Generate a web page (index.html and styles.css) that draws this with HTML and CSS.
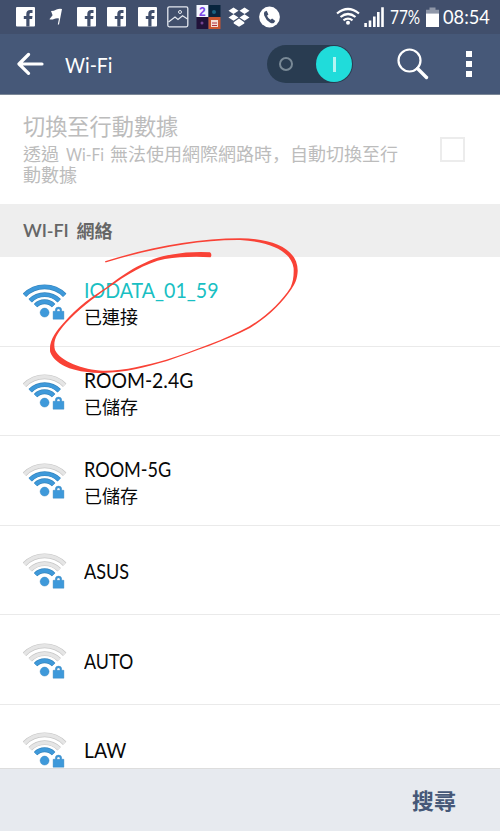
FILE: index.html
```html
<!DOCTYPE html>
<html lang="zh-Hant">
<head>
<meta charset="utf-8">
<title>Wi-Fi</title>
<link rel="stylesheet" href="styles.css">
</head>
<body>
<svg class="defs" width="0" height="0">
  <defs>
    <g id="fb"><rect width="19" height="19.500" rx="1" fill="#fff"/><path d="M10.300 19.500V12H7.800V9h2.500V7c0-2.600 1.500-4 4-4h2.200v2.900H15c-1.200 0-1.500.5-1.500 1.500V9h3l-.4 3h-2.600v7.500z" fill="#414f6c"/></g>
    <path id="arc3" d="M2.500 12.200A28.300 28.300 0 0 1 42.700 12.200"/>
    <path id="arc2" d="M8.200 17.800A20.300 20.300 0 0 1 37.200 17.800"/>
    <path id="arc1" d="M13.600 22.600A12.400 12.400 0 0 1 31.600 22.600"/>
    <g id="base"><circle cx="22.600" cy="29.600" r="4.500"/><path d="M31.100 28.300h2.200v-1.300q0-2.900 3.200-2.900t3.200 2.900v1.300h2.200v7.900H31.100zM35 28.300h3v-1q0-1.400-1.500-1.400t-1.500 1.400z" fill-rule="evenodd"/></g>
  </defs>
</svg>
<div class="screen">
  <div class="status">
    <svg class="notices" width="300" height="34" viewBox="0 0 300 34">
      <use href="#fb" x="16" y="7"/>
      <path d="M51 11q3 0 5.500-1.500Q59 8.500 62 9l-3 15.500h-1.200l1.200-6q-2.500-.8-5 .6-2 .9-4.600.2l3.200-4z" fill="#fff"/>
      <use href="#fb" x="77" y="7"/><use href="#fb" x="107" y="7"/><use href="#fb" x="138" y="7"/>
      <g fill="none" stroke="#e4e8ef"><rect x="167.800" y="6.800" width="20" height="20" rx="1.500" stroke-width="1.300"/><path d="M168.500 22l6.500-5 3 2.500 4.500-3.800 5 3.300" stroke-width="1.200"/><circle cx="180" cy="12" r="1.500"/></g>
      <rect x="196.500" y="5" width="12" height="12" fill="#f4f7ff"/><rect x="208.500" y="5" width="12" height="12" fill="#08243d"/><rect x="196.500" y="17" width="12" height="12" fill="#211239"/><rect x="208.500" y="17" width="12" height="12" fill="#c95731"/>
      <circle cx="214" cy="12" r="2" fill="#176281"/><circle cx="202" cy="23" r="1.500" fill="#744490"/><path d="M211 20h7v7h-7z" fill="#f5dfd5"/><path d="M212 23h5M212 25.500h5" stroke="#b3303f"/>
      <text x="199" y="15.500" class="tile-num">2</text>
      <g fill="#fff"><path d="M233.500 7.500l5 3.200-5 3.300-5-3.300zM244.500 7.500l5 3.200-5 3.300-5-3.300zM233.500 14.200l5 3.200-5 3.300-5-3.300zM244.500 14.200l5 3.200-5 3.300-5-3.300zM239 18.500l5.300 3.700v1.300l-5.300 3.300-5.300-3.300v-1.300z"/><circle cx="269.500" cy="17" r="10.400"/></g>
      <path d="M264.500 11.800l2.200-1 1.700 3.600-1.400 1.300q1 2.500 3.500 4l1.600-1.100 3.200 2.400-1.500 2q-1.500.9-3.900-.5-4-2.400-5.700-7-.7-2.400.3-3.700z" fill="#414f6c"/>
    </svg>
    <svg class="signals" width="48" height="34" viewBox="336 0 48 34">
      <g fill="none" stroke="#fff" stroke-width="2.200"><path d="M337 13.500q11-9 22 0"/><path d="M340.500 17q7.500-6 15 0"/><path d="M343.500 20.300q4.500-3.500 9 0"/></g><circle cx="348" cy="22.800" r="2" fill="#fff"/>
      <path d="M364.300 23h2.600v4h-2.600zM368.700 20.500h2.600v6.500h-2.600zM373 16.500h2.600v10.500h-2.600zM377 12h2.600v15h-2.600zM381.200 7.300h2.600v19.700h-2.600z" fill="#fff"/>
    </svg>
    <span class="percent">77%</span>
    <svg class="battery" width="13" height="34" viewBox="0 0 13 34"><path d="M3.500 7.500h6v2.300H13v4H0v-4h3.500z" fill="#8f97a8"/><path d="M0 13.500h13V27H0z" fill="#fff"/></svg>
    <span class="clock">08:54</span>
  </div>
  <header class="bar">
    <svg class="back" width="27" height="24" viewBox="0 0 27 24"><path d="M11.500 2.500L2 12l9.500 9.300M2.500 12H25" fill="none" stroke="#fff" stroke-width="3.200" stroke-linecap="round" stroke-linejoin="round"/></svg>
    <h1>Wi-Fi</h1>
    <div class="toggle"><span class="off"></span><span class="knob"><span class="tick"></span></span></div>
    <svg class="search" width="32" height="32" viewBox="0 0 32 32"><circle cx="12.500" cy="12.500" r="11" fill="none" stroke="#fff" stroke-width="2.200"/><path d="M20.500 20.500l9 9" stroke="#fff" stroke-width="3.400" stroke-linecap="round"/></svg>
    <div class="more"><i></i><i></i><i></i></div>
  </header>
  <section class="pref">
    <div class="pref-text">
      <h2>切換至行動數據</h2>
      <p>透過<span class="wf">Wi-Fi</span>無法使用網際網路時<span class="comma" lang="ja">，</span>自動切換至行<br>動數據</p>
    </div>
    <span class="check"></span>
  </section>
  <div class="section"><span class="en">WI-FI</span><span class="zh">網絡</span></div>
  <ul class="list">
    <li><svg class="wifi" viewBox="0 0 46 40"><g class="on"><use href="#arc3"/><use href="#arc2"/><use href="#arc1"/></g><g class="on in"><use href="#arc3"/><use href="#arc2"/><use href="#arc1"/></g><use class="base" href="#base"/></svg><div class="pair"><b class="linked">IODATA_01_59</b><small>已連接</small></div></li>
    <li><svg class="wifi" viewBox="0 0 46 40"><g class="dim"><use href="#arc3"/></g><g class="dim in"><use href="#arc3"/></g><g class="on"><use href="#arc2"/><use href="#arc1"/></g><g class="on in"><use href="#arc2"/><use href="#arc1"/></g><use class="base" href="#base"/></svg><div class="pair"><b class="room24">ROOM-2.4G</b><small>已儲存</small></div></li>
    <li><svg class="wifi" viewBox="0 0 46 40"><g class="dim"><use href="#arc3"/></g><g class="dim in"><use href="#arc3"/></g><g class="on"><use href="#arc2"/><use href="#arc1"/></g><g class="on in"><use href="#arc2"/><use href="#arc1"/></g><use class="base" href="#base"/></svg><div class="pair"><b class="room5">ROOM-5G</b><small>已儲存</small></div></li>
    <li><svg class="wifi" viewBox="0 0 46 40"><g class="dim"><use href="#arc3"/><use href="#arc2"/></g><g class="dim in"><use href="#arc3"/><use href="#arc2"/></g><g class="on"><use href="#arc1"/></g><g class="on in"><use href="#arc1"/></g><use class="base" href="#base"/></svg><div class="single"><b class="asus">ASUS</b></div></li>
    <li><svg class="wifi" viewBox="0 0 46 40"><g class="dim"><use href="#arc3"/><use href="#arc2"/></g><g class="dim in"><use href="#arc3"/><use href="#arc2"/></g><g class="on"><use href="#arc1"/></g><g class="on in"><use href="#arc1"/></g><use class="base" href="#base"/></svg><div class="single"><b class="auto">AUTO</b></div></li>
    <li><svg class="wifi" viewBox="0 0 46 40"><g class="dim"><use href="#arc3"/><use href="#arc2"/></g><g class="dim in"><use href="#arc3"/><use href="#arc2"/></g><g class="on"><use href="#arc1"/></g><g class="on in"><use href="#arc1"/></g><use class="base" href="#base"/></svg><div class="single"><b class="law">LAW</b></div></li>
  </ul>
  <footer><button>搜尋</button></footer>
  <svg class="mark" width="260" height="145" viewBox="45 232 260 145">
    <path fill="#f94236" d="M105 261.300C150 247 197 238.300 240 238.300C275 238.500 298 250 297.700 271C297.300 279 295 284 291.500 289C283 302 268 317 250 328C225 341 195 351 167 361C145 367.500 125 372.500 103 373C78 373 56 367 50.200 352C48.500 341 56 331 64 322.500C78 306 92 297 107 287C125 273 147 258 172 254.500Q190 251.300 210 252.300Q212.500 254.500 210.500 257.200Q185 256 165 259C145 263 126 275 108 288C92 299 79 309 66 323C57 333 52.500 341 55 350C60 361 83 370 103 370.700C125 371 145 365.500 167 359.500C195 350 225 339.500 249 326.500C267 316 282 301 290.500 287.500C293 282 294 276 293.600 268C291 251 270 241.500 240 240C197 239.600 150 249 105.500 262.500Z"/>
  </svg>
</div>
</body>
</html>
```
FILE: styles.css
```css
* { box-sizing: border-box; }
body { margin: 0; background: #fff; font-family: Lato, "Noto Sans CJK TC", sans-serif; }
.defs { position: absolute; }
.screen { position: relative; width: 500px; height: 831px; display: flex; flex-direction: column; overflow: hidden; }
.status { height: 34px; flex: none; background: #414f6c; display: flex; align-items: center; color: #fff; font-size: 19px; line-height: 34px; }
.notices { margin-right: 36px; }
.tile-num { font: bold 12px "Liberation Sans", sans-serif; fill: #7b48e8; }
.percent { width: 36px; margin-left: 6px; font-size: 18.500px; white-space: nowrap; transform: scaleX(.83); transform-origin: left; }
.clock { margin-left: 4px; white-space: nowrap; transform: scaleX(.96); transform-origin: left; }
.bar { height: 61px; flex: none; background: #465878; border-bottom: 1px solid #7b8797; display: flex; align-items: center; padding-left: 17px; }
h1 { margin: 1px 0 0 21px; width: 202px; color: #fff; font-size: 22px; line-height: 30px; font-weight: 400; transform: scaleX(.88); transform-origin: left; }
.toggle { width: 86px; height: 38px; border-radius: 19px; background: #293c51; display: flex; align-items: center; justify-content: space-between; padding: 0 1px 0 12px; }
.off { width: 14px; height: 14px; border: 2px solid #798996; border-radius: 50%; }
.knob { width: 36px; height: 36px; border-radius: 50%; background: #20dcda; display: flex; align-items: center; justify-content: center; }
.tick { width: 3px; height: 15px; background: #b4f4f2; }
.search { margin-left: 44px; }
.more { margin-left: 37px; display: flex; flex-direction: column; gap: 4px; }
.more i { width: 6px; height: 6px; background: #fff; }
.pref { height: 109px; flex: none; display: flex; align-items: center; justify-content: space-between; padding: 0 35px 0 23px; color: #bcbcbc; }
h2 { margin: 0 0 2px; font-size: 22.200px; line-height: 28px; font-weight: 400; }
.pref p { margin: 0; font-size: 18px; line-height: 21px; white-space: nowrap; }
.wf { display: inline-block; width: 37px; margin: 0 7px; transform: scaleX(.86); transform-origin: left; }
.comma { font-family: "Noto Sans CJK JP", sans-serif; }
.check { width: 25px; height: 25px; border: 2px solid #ececec; }
.section { height: 53px; flex: none; background: #eee; color: #666; padding: 0 0 2px 23px; display: flex; align-items: center; gap: 8px; font-size: 18px; font-weight: 500; }
.en { font-weight: 600; letter-spacing: -.1px; }
.zh { font-weight: 700; }
.list { margin: 0; padding: 0; list-style: none; flex: 1; min-height: 0; overflow: hidden; }
.list li { height: 89.600px; display: flex; align-items: center; border-bottom: 1.500px solid #eaeaea; padding-left: 22px; gap: 16px; color: #080808; }
.wifi { width: 46px; height: 40px; flex: none; margin-top: 4px; }
.wifi g { fill: none; stroke-width: 4.800; }
.wifi .in { stroke-width: 3.400; }
.on { stroke: #3484bd; }
.on.in { stroke: #3e99da; }
.dim { stroke: #c6c6c6; }
.dim.in { stroke: #e5e5e5; }
.base { fill: #3e99da; stroke: #3484bd; stroke-width: .4; }
.pair { padding-top: 6px; }
.single { padding-top: 3px; }
.list b { display: block; font-weight: 400; font-size: 21.500px; line-height: 27px; transform-origin: left; }
.list small { display: block; font-size: 18px; line-height: 27px; }
.list .linked { color: #19bfc3; transform: scaleX(.912); }
.room24 { transform: scaleX(.9); }
.room5 { transform: scaleX(.84); }
.asus { transform: scaleX(.84); }
.auto { transform: scaleX(.83); }
.law { transform: scaleX(.9); }
footer { height: 63px; flex: none; background: #e7eaef; border-top: 1px solid #ddd; display: flex; align-items: center; justify-content: flex-end; padding: 0 44px 2px 0; }
button { border: 0; padding: 0; background: none; color: #465878; font: bold 22px "Noto Sans CJK TC", sans-serif; }
.mark { position: absolute; left: 45px; top: 232px; }
```
